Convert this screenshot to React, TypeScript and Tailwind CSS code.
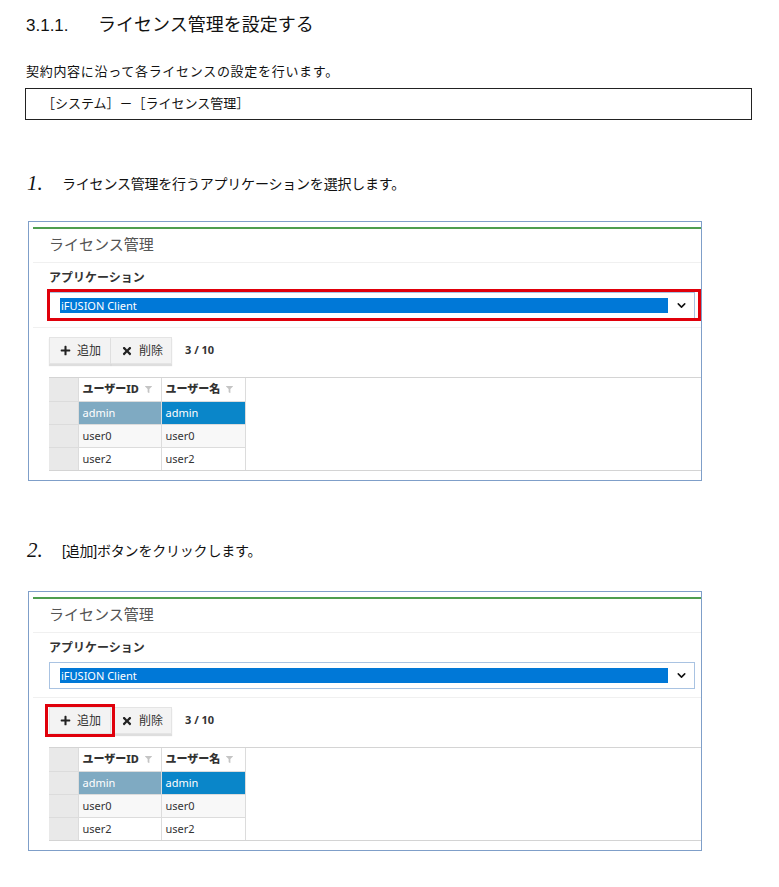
import { FaPlus, FaTimes, FaFilter } from "react-icons/fa";
import { ChevronDown } from "lucide-react";

const docFont = { fontFamily: '"Liberation Sans", "Noto Sans CJK JP", sans-serif' };
const uiFont = { fontFamily: '"Noto Sans", "Noto Sans CJK JP", sans-serif' };

const rows = [
  { id: "admin", name: "admin", selected: true },
  { id: "user0", name: "user0", selected: false },
  { id: "user2", name: "user2", selected: false },
];

function LicensePanel({ highlight }: { highlight: "select" | "add" }) {
  return (
    <div className="ml-[3px] w-[674px] border border-[#7f9fc9] bg-white pt-[5px] pb-[9px] pl-[4px]" style={uiFont}>
      <div className="border-t-2 border-[#4f9e4f]">
        {/* panel title */}
        <div className="h-[34px] border-b border-[#f0f0f0] pl-[16px] pt-[5px] text-[15px] leading-[20px] text-[#555]">
          ライセンス管理
        </div>

        {/* application select */}
        <div className="border-b border-[#f0f0f0] pl-[16px] pr-[6px] pt-[7px] pb-[8px]">
          <div className="h-[16px] text-[12px] font-bold leading-[16px] text-[#333]">アプリケーション</div>
          <div className="relative mt-[6px]">
            <div className="flex h-[27px] items-center border border-[#a9c3e2] bg-white pl-[10px]">
              <span className="h-[15px] flex-1 bg-[#0078d7] pl-[1px] text-[11px] leading-[15px] text-white">iFUSION Client</span>
              <span className="flex w-[26px] items-center justify-center text-[#111]">
                <ChevronDown size={13} strokeWidth={2.8} />
              </span>
            </div>
            {highlight === "select" && (
              <span className="pointer-events-none absolute -left-[2px] -top-[3px] -right-[6px] -bottom-[2px] border-[3px] border-[#e0000b]" />
            )}
          </div>
        </div>

        {/* toolbar */}
        <div className="flex items-center pl-[16px] pt-[9px]">
          <div className="relative flex">
            <button className="flex h-[27px] w-[62px] items-center gap-[6px] border border-[#e4e4e4] bg-[#f3f3f3] pl-[10px] text-[12px] text-[#333] shadow-[0_2px_1px_rgba(0,0,0,0.13)]">
              <FaPlus size={11} className="text-[#222]" />
              追加
            </button>
            <button className="flex h-[27px] w-[61px] items-center gap-[6px] border border-l-0 border-[#e4e4e4] bg-[#f3f3f3] pl-[10px] text-[12px] text-[#333] shadow-[0_2px_1px_rgba(0,0,0,0.13)]">
              <FaTimes size={12} className="text-[#222]" />
              削除
            </button>
            {highlight === "add" && (
              <span className="pointer-events-none absolute -left-[4px] -top-[3px] w-[70px] -bottom-[3px] border-[3px] border-[#e0000b]" />
            )}
          </div>
          <span className="ml-[13px] text-[11px] font-bold text-[#333]">3 / 10</span>
        </div>

        {/* user grid */}
        <div className="ml-[16px] mt-[13px] border-y border-[#d4d4d4]">
          <table className="border-collapse text-[11px] leading-[22px] text-[#333]">
            <thead>
              <tr className="h-[23px]">
                <th className="w-[29px] border-r border-[#dcdcdc] bg-[#e9e9e9] p-0" />
                <th className="w-[83px] border-r border-[#dcdcdc] bg-white p-0 pl-[4px] text-left font-extrabold">
                  <span className="flex items-center gap-[6px]">
                    ユーザーID <FaFilter size={7} className="text-[#c4c4c4]" />
                  </span>
                </th>
                <th className="w-[84px] border-r border-[#dcdcdc] bg-white p-0 pl-[4px] text-left font-extrabold">
                  <span className="flex items-center gap-[6px]">
                    ユーザー名 <FaFilter size={7} className="text-[#c4c4c4]" />
                  </span>
                </th>
              </tr>
            </thead>
            <tbody>
              {rows.map((r, i) => (
                <tr key={r.id} className={`h-[23px] border-t border-[#dcdcdc] ${i === 1 ? "bg-[#f8f8f8]" : "bg-white"}`}>
                  <td className="border-r border-[#dcdcdc] bg-[#e9e9e9] p-0" />
                  <td className={`border-r border-[#dcdcdc] p-0 pl-[4px] ${r.selected ? "bg-[#7faac2] text-white" : ""}`}>{r.id}</td>
                  <td className={`border-r border-[#dcdcdc] p-0 pl-[4px] ${r.selected ? "bg-[#0a86c9] text-white" : ""}`}>{r.name}</td>
                </tr>
              ))}
            </tbody>
          </table>
        </div>
      </div>
    </div>
  );
}

function Step({ num, text }: { num: string; text: string }) {
  return (
    <div className="ml-[2px] flex h-[24px] items-center">
      <span className="w-[35px] text-[21px] italic text-[#111]" style={{ fontFamily: '"Liberation Serif", serif' }}>
        {num}
      </span>
      <span className="text-[14px] tracking-[-0.2px] text-[#111]" style={docFont}>{text}</span>
    </div>
  );
}

export default function App() {
  return (
    <main className="min-h-screen w-[779px] bg-white pb-[38px] pl-[25px] text-[#111]" style={docFont}>
      <h1 className="h-[37px] pt-[13px] text-[18px] font-normal leading-[24px]">
        <span className="inline-block w-[73px] pl-[1px] text-[17px]">3.1.1.</span>
        ライセンス管理を設定する
      </h1>

      <p className="mt-[26px] h-[18px] pl-[1px] text-[13px] leading-[18px] tracking-[0.7px]">
        契約内容に沿って各ライセンスの設定を行います。
      </p>

      <div className="mt-[7px] flex h-[32px] w-[727px] items-center border border-[#222] pl-[16px] text-[13px]">
        ［システム］－［ライセンス管理］
      </div>

      <div className="mt-[52px]">
        <Step num="1." text="ライセンス管理を行うアプリケーションを選択します。" />
      </div>
      <div className="mt-[25px]">
        <LicensePanel highlight="select" />
      </div>

      <div className="mt-[58px]">
        <Step num="2." text="[追加]ボタンをクリックします。" />
      </div>
      <div className="mt-[28px]">
        <LicensePanel highlight="add" />
      </div>
    </main>
  );
}
